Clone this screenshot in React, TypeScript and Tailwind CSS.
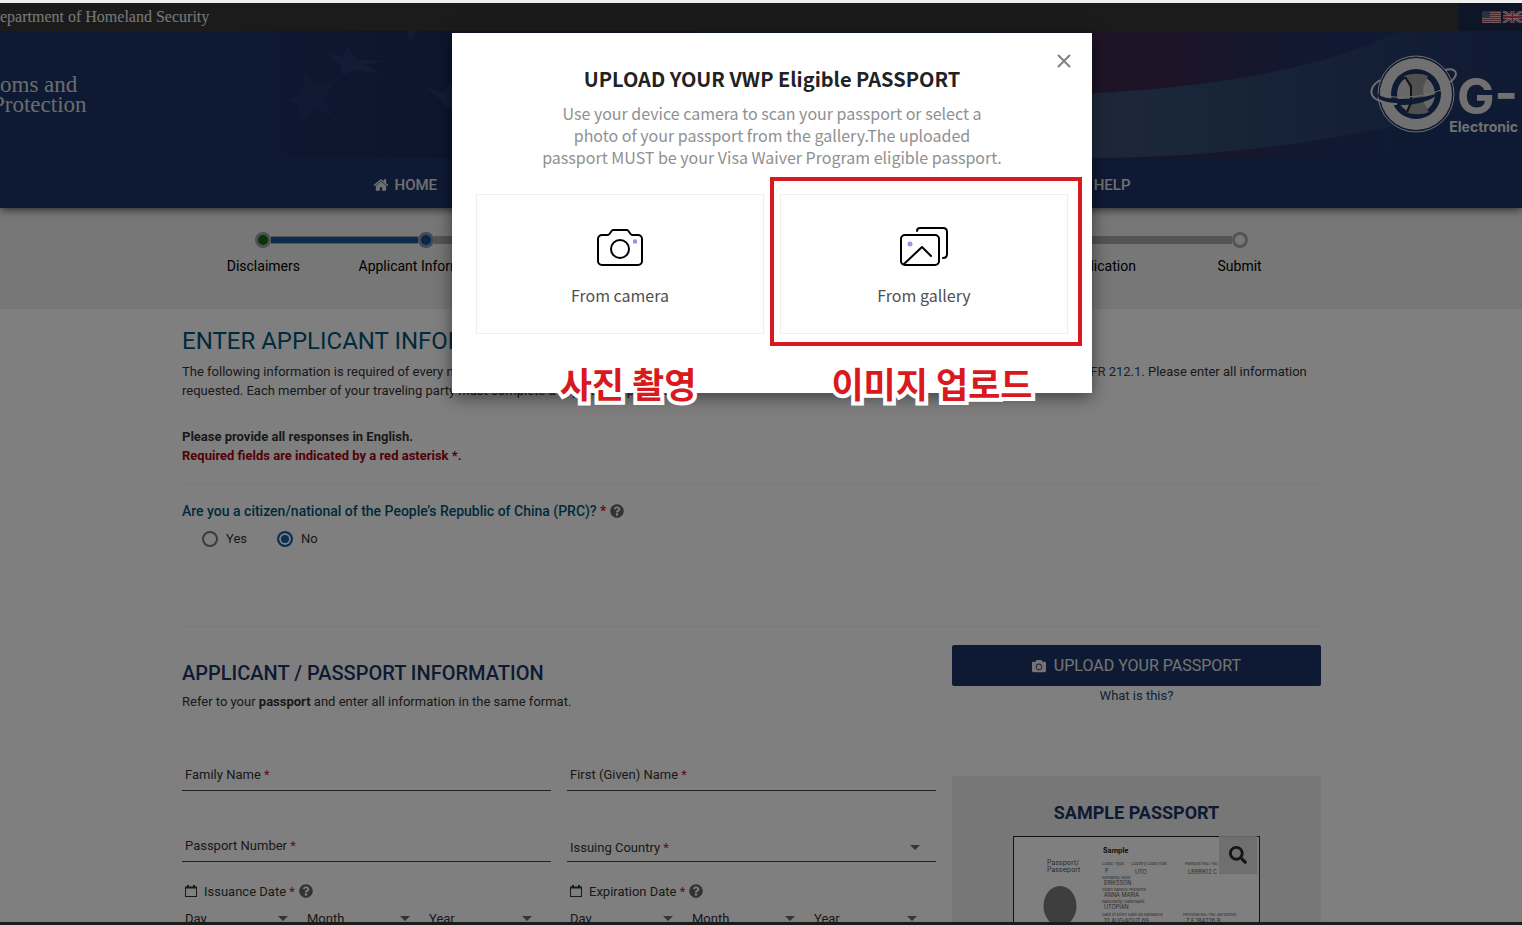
import { FaCamera, FaQuestionCircle, FaSearch } from "react-icons/fa";

const steps = [
  "Disclaimers",
  "Applicant Information",
  "Personal Information",
  "Travel Information",
  "Eligibility Questions",
  "Review Application",
  "Submit",
];

function Caret() {
  return (
    <svg viewBox="0 0 10 5" className="w-[10px] h-[5px] shrink-0 pointer-events-none" fill="#6b6b6b" aria-hidden="true">
      <path d="M0 0h10L5 5z" />
    </svg>
  );
}

function HomeIcon() {
  return (
    <svg viewBox="0 0 1792 1792" className="size-4" fill="currentColor" aria-hidden="true">
      <path d="M1472 992v480q0 26-19 45t-45 19h-384v-384h-256v384h-384q-26 0-45-19t-19-45v-480q0-1 .5-3t.5-3l575-474 575 474q1 2 1 6zm223-69l-62 74q-8 9-21 11h-3q-13 0-21-7l-692-577-692 577q-12 8-24 7-13-2-21-11l-62-74q-8-10-7-23.500t11-21.500l719-599q32-26 76-26t76 26l244 204v-195q0-14 9-23t23-9h192q14 0 23 9t9 23v408l219 182q10 8 11 21.500t-7 23.500z" />
    </svg>
  );
}

function CalendarIcon() {
  return (
    <svg viewBox="0 0 12 14" className="w-3 h-[14px] mr-[7px]" fill="none" stroke="#333333" aria-hidden="true">
      <rect x="0.5" y="3.500" width="11" height="9" />
      <path d="M0 3.500h12" strokeWidth="2" />
      <path d="M3 1v3M9 1v3" strokeWidth="2" />
    </svg>
  );
}

function Required() {
  return <span className="text-[#c8102e]">*</span>;
}

function Flags() {
  return (
    <svg viewBox="0 0 40 12" className="w-10 h-3" aria-label="Language">
      <rect width="19" height="12" fill="#e8c8cc" />
      {[0, 2, 4, 6, 8, 10].map((y) => (
        <rect key={y} y={y} width="19" height="1.200" fill="#d8404a" />
      ))}
      <rect width="8" height="6.500" fill="#4a6296" />
      <g transform="translate(21 0)">
        <rect width="19" height="12" fill="#26396e" />
        <path d="M0 0l19 12M19 0L0 12" stroke="#e8e0e0" strokeWidth="2.400" />
        <path d="M0 0l19 12M19 0L0 12" stroke="#d8404a" strokeWidth="0.9" />
        <path d="M9.500 0v12M0 6h19" stroke="#e8e0e0" strokeWidth="3.600" />
        <path d="M9.500 0v12M0 6h19" stroke="#d8404a" strokeWidth="2" />
      </g>
    </svg>
  );
}

function BannerArt() {
  return (
    <svg viewBox="0 0 1522 127" preserveAspectRatio="xMidYMin slice" className="absolute inset-0 w-full h-full" aria-hidden="true">
      <defs>
        <linearGradient id="canton" x1="0" x2="1">
          <stop offset="0" stopColor="#182c58" stopOpacity="0" />
          <stop offset="0.5" stopColor="#182c58" />
          <stop offset="1" stopColor="#182a52" />
        </linearGradient>
        <linearGradient id="stripe" x1="0" x2="1">
          <stop offset="0" stopColor="#42284e" />
          <stop offset="0.4" stopColor="#3a2850" />
          <stop offset="1" stopColor="#1e3466" stopOpacity="0" />
        </linearGradient>
        <linearGradient id="band" x1="0" x2="1">
          <stop offset="0" stopColor="#405778" />
          <stop offset="0.45" stopColor="#304870" />
          <stop offset="1" stopColor="#1e3466" />
        </linearGradient>
      </defs>
      <rect x="200" width="500" height="127" fill="url(#canton)" />
      <rect x="1000" width="440" height="127" fill="url(#stripe)" />
      <path d="M1000 66C1150 62 1290 52 1400 0H1522V70C1440 82 1300 127 1092 127H1000Z" fill="url(#band)" />
      <g fill="#26396a">
        <path d="M323 19l18 7 7-10 8 12 27 2-18 4 14 8-23-3-14 5-1-10z" />
        <path d="M305 42l9 14 23-7-15 19 12 18-22-9-12 16-2-20-11-4 14-6z" opacity="0.6" />
        <path d="M426 57l17 4 9-8v28l-10-11z" />
        <path d="M408 0h9l-6 10-3-4z" />
      </g>
    </svg>
  );
}

function GlobalLogo() {
  return (
    <svg viewBox="0 0 88 78" className="w-[88px] h-[78px]" fill="none" aria-hidden="true">
      <path d="M76 15c8-2 13 1 10 7-2 3-4 5-8 6" stroke="#e0e0e0" strokeWidth="2" />
      <circle cx="47" cy="39" r="38" stroke="#e0e0e0" strokeWidth="1" />
      <circle cx="47" cy="39" r="36" fill="#e0e0e0" />
      <circle cx="47" cy="39" r="25" fill="#1c3466" />
      <circle cx="47" cy="39" r="19" fill="#d0d0d0" />
      <path d="M35 21c8-3 17-3 24 0l-5 12 1 15 5 9c-7 3-16 3-23 0l4-10V34z" fill="#a0a0a0" />
      <path d="M36 22l6 9v17l-4 9" stroke="#222222" strokeWidth="2" />
      <path d="M10 27c-9 11 1 17 21 17 17 0 31-3 41-7-9 8-22 13-38 13C13 50 2 41 10 27z" fill="#1c3466" />
      <path d="M11 25C-1 33-1 43 14 47c5 1 9 2 14 2" stroke="#e0e0e0" strokeWidth="2" />
      <path d="M12 33c-3 6 8 10 21 9 16 0 29-3 39-7" stroke="#e0e0e0" strokeWidth="1" />
    </svg>
  );
}

function Header() {
  return (
    <header className="relative z-10 shadow-[0_2px_8px_rgba(0,0,0,0.6)] font-['Roboto',sans-serif]">
      <div className="flex justify-between bg-[#363636] h-7">
        <p className="font-['Liberation_Serif',serif] text-base leading-7 text-[#f0f0f0]">epartment of Homeland Security</p>
        <div className="flex items-center bg-[#1a2a4c] w-16 pl-6 overflow-hidden">
          <Flags />
        </div>
      </div>
      <div className="bg-[#1c3466]">
        <div className="relative h-[127px]">
          <BannerArt />
          <div className="relative flex justify-between items-start overflow-hidden h-full">
            <p className="font-['Liberation_Serif',serif] text-[23px] leading-5 text-[#d8d8d8] pt-11">
              oms and
              <br />
              <span className="-ml-2">Protection</span>
            </p>
            <div className="flex pt-6 pr-1 text-[#e0e0e0] font-['Inter',sans-serif]">
              <GlobalLogo />
              <div className="-ml-2 pt-4 text-right">
                <p className="text-[50px] leading-[50px] font-bold">G-</p>
                <p className="text-sm leading-3 font-bold">Electronic</p>
              </div>
            </div>
          </div>
        </div>
        <div className="pr-[19px]">
          <nav className="flex justify-between items-center max-w-[758px] mx-auto h-[50px] pb-1 pt-2 text-[15px] font-medium text-[#e0e0e0]">
            <a href="#home" className="flex items-center gap-[6px]"><HomeIcon /> HOME</a>
            <a href="#new">NEW APPLICATION</a>
            <a href="#status">CHECK ESTA STATUS</a>
            <a href="#help">HELP</a>
          </nav>
        </div>
      </div>
    </header>
  );
}

function Stepper() {
  return (
    <section className="bg-[#eeeeee] h-[101px] pt-6 pr-[19px]">
      <ol className="grid grid-cols-7 max-w-[1139px] mx-auto text-sm text-black">
        {steps.map((step, i) => (
          <li key={step} className="flex flex-col items-center">
            <div className="flex items-center w-full">
              <span className={i === 0 ? "flex-1" : i === 1 ? "flex-1 h-2 bg-[#18599a] border-y border-[#aaaaaa]" : "flex-1 h-2 bg-[#a8a8a8]"}></span>
              <span
                className={
                  i === 0
                    ? "size-4 rounded-full border-3 border-[#a0a0a0] bg-[#0a6a14]"
                    : i === 1
                      ? "size-4 rounded-full border-3 border-[#8496ac] bg-[#125098]"
                      : "size-4 rounded-full border-3 border-[#a8a8a8] bg-[#eeeeee]"
                }
              ></span>
              <span className={i === 6 ? "flex-1" : i === 0 ? "flex-1 h-2 bg-[#18599a] border-y border-[#aaaaaa]" : "flex-1 h-2 bg-[#a8a8a8]"}></span>
            </div>
            <span className="mt-2 leading-5 whitespace-nowrap">{step}</span>
          </li>
        ))}
      </ol>
    </section>
  );
}

function TextField({ id, label }: { id: string; label: string }) {
  return (
    <div className="flex items-center h-9 pl-[3px] pt-[3px] border-b border-[#444444]">
      <label htmlFor={id} className="shrink-0">{label} <Required /></label>
      <input id={id} type="text" className="flex-1 min-w-0 bg-transparent outline-none" />
    </div>
  );
}

function DateField({ id, label }: { id: string; label: string }) {
  return (
    <fieldset>
      <legend className="flex items-center h-5 pl-[3px]">
        <CalendarIcon />
        {label}&nbsp;<Required />
        <FaQuestionCircle className="size-[14px] ml-1 text-[#666666]" />
      </legend>
      <div className="grid grid-cols-3 pt-px pr-[3px]">
        {["Day", "Month", "Year"].map((part) => (
          <div key={part} className="flex items-center h-8 pl-[3px] pr-4">
            <select id={`${id}-${part}`} aria-label={`${label} ${part}`} className="flex-1 min-w-0 appearance-none bg-transparent">
              <option>{part}</option>
            </select>
            <Caret />
          </div>
        ))}
      </div>
    </fieldset>
  );
}

function SamplePassport() {
  return (
    <svg viewBox="0 0 247 160" className="block w-[247px] h-[160px]" fontFamily="Inter, sans-serif" fill="#555555">
      <rect x="0.5" y="0.5" width="246" height="159" fill="#ffffff" stroke="#222222" />
      <text x="90" y="17" fontSize="7" fontWeight="700" fill="#222222">Sample</text>
      <g fontSize="7">
        <text x="34" y="29">Passport/</text>
        <text x="34" y="36">Passeport</text>
      </g>
      <ellipse cx="47" cy="70" rx="16.500" ry="20" fill="#7c7c7c" />
      <g fontSize="4">
        <text x="89" y="29">Code/ Type</text>
        <text x="118" y="29">Country code/ Etat</text>
        <text x="172" y="29">Passport No./ No.</text>
        <text x="89" y="43">Surname/ Nom</text>
        <text x="89" y="55">Given names/ Prénoms</text>
        <text x="89" y="67">Nationality/ Nationalité</text>
        <text x="89" y="80">Date of birth/ Date de naissance</text>
        <text x="170" y="80">Personal No./ No. personnel</text>
      </g>
      <g fontSize="5.500">
        <text x="92" y="37">P</text>
        <text x="122" y="38">UTO</text>
        <text x="175" y="38">L898902 C</text>
        <text x="91" y="49">ERIKSSON</text>
        <text x="91" y="61">ANNA MARIA</text>
        <text x="91" y="73">UTOPIAN</text>
        <text x="91" y="87">12 AUG/AOUT 69</text>
        <text x="173" y="87">Z E 184226 B</text>
      </g>
    </svg>
  );
}

function ApplicantForm() {
  return (
    <main className="pr-[19px]">
      <div className="max-w-[1139px] mx-auto pt-4 text-[13px] leading-[19px] text-[#333333]">
        <h1 className="text-2xl leading-8 text-[#015577]">ENTER APPLICANT INFORMATION</h1>
        <p className="mt-[5px]">
          The following information is required of every nonimmigrant visitor not in possession of a visitor's visa, traveling to the United States by air or by sea under <a href="#cfr" className="text-[#1b4a7a]">8 CFR 212.1.</a> Please enter all information
          requested. Each member of your traveling party must complete a separate application.
        </p>
        <p className="mt-[27px] font-bold">Please provide all responses in English.</p>
        <p className="font-bold text-[#a8000c]">Required fields are indicated by a red asterisk *.</p>
        <hr className="mt-[19px] border-[#f3f3f3]" />
        <fieldset>
          <legend className="flex items-center pt-4 text-sm leading-5 font-medium text-[#015577]">
            Are you a citizen/national of the People’s Republic of China (PRC)?&nbsp;<Required />
            <FaQuestionCircle className="size-[14px] ml-1 text-[#666666]" />
          </legend>
          <div className="flex gap-[30px] mt-2 pl-5 leading-5">
            {["Yes", "No"].map((answer) => (
              <label key={answer} className="flex items-center gap-2">
                <input
                  type="radio"
                  name="prc"
                  defaultChecked={answer === "No"}
                  className="appearance-none size-4 rounded-full border-2 border-[#757575] checked:border-[#125ea8] checked:bg-[#125ea8] checked:shadow-[inset_0_0_0_2px_white]"
                />
                {answer}
              </label>
            ))}
          </div>
        </fieldset>
        <hr className="mt-[77px] border-[#f3f3f3]" />
        <div className="grid grid-cols-3 gap-x-4 mt-[18px]">
          <div className="col-span-2 pt-4">
            <h2 className="text-xl leading-6 font-medium text-[#1c3466]">APPLICANT / PASSPORT INFORMATION</h2>
            <p className="mt-[7px] leading-5">Refer to your <b>passport</b> and enter all information in the same format.</p>
            <div className="grid grid-cols-2 gap-x-4 mt-[43px]">
              <TextField id="family" label="Family Name" />
              <TextField id="first" label="First (Given) Name" />
            </div>
            <div className="grid grid-cols-2 gap-x-4 mt-[35px]">
              <TextField id="number" label="Passport Number" />
              <div className="flex items-center h-9 pl-[3px] pr-4 pt-[7px] border-b border-[#444444]">
                <label htmlFor="country" className="shrink-0">Issuing Country <Required /></label>
                <select id="country" className="flex-1 min-w-0 appearance-none bg-transparent"></select>
                <Caret />
              </div>
            </div>
            <div className="grid grid-cols-2 gap-x-4 mt-[19px]">
              <DateField id="issuance" label="Issuance Date" />
              <DateField id="expiration" label="Expiration Date" />
            </div>
          </div>
          <div className="flex flex-col">
            <button className="flex items-center justify-center gap-2 h-[41px] rounded-xs bg-[#1c3466] text-base text-[#e8e8e8]">
              <FaCamera className="size-[14px]" /> UPLOAD YOUR PASSPORT
            </button>
            <a href="#what" className="self-center leading-5 text-[#114a78]">What is this?</a>
            <div className="flex flex-col items-center mt-[70px] pt-[25px] pb-8 bg-[#eeeeee]">
              <h3 className="text-lg leading-6 font-bold text-[#1c3466]">SAMPLE PASSPORT</h3>
              <div className="relative mt-[11px]">
                <SamplePassport />
                <button aria-label="Enlarge sample passport" className="absolute top-0 right-[3px] flex items-center justify-center size-[38px] bg-[#dcdce2]/90 text-[#2a2a2a]">
                  <FaSearch className="size-[18px]" />
                </button>
              </div>
            </div>
          </div>
        </div>
      </div>
    </main>
  );
}

function UploadDialog() {
  return (
    <div role="dialog" aria-labelledby="upload-title" className="relative w-[640px] h-[360px] mt-[30px] px-6 bg-white shadow-[0_4px_16px_rgba(0,0,0,0.5)] font-['Noto_Sans_CJK_KR',sans-serif] text-center">
      <button aria-label="Close" className="absolute top-[21px] right-[21px]">
        <svg viewBox="0 0 14 14" className="size-[14px]" stroke="#808080" strokeWidth="2"><path d="M1 1l12 12M13 1L1 13" /></svg>
      </button>
      <h2 id="upload-title" className="pt-8 text-xl leading-7 font-bold text-[#222222]">UPLOAD YOUR VWP Eligible PASSPORT</h2>
      <p className="mt-[9px] text-base leading-[22px] text-[#909090]">
        Use your device camera to scan your passport or select a
        <br />
        photo of your passport from the gallery.The uploaded
        <br />
        passport MUST be your Visa Waiver Program eligible passport.
      </p>
      <div className="grid grid-cols-2 gap-4 mt-[26px] text-base leading-6 text-[#505050]">
        <button className="relative flex flex-col items-center h-[140px] pt-[30px] border border-[#eeeeee]">
          <svg viewBox="0 0 48 44" className="w-12 h-11" fill="none" stroke="#000000" strokeWidth="2" aria-hidden="true">
            <path d="M6 10h6c2 0 3-5 5-5h14c2 0 3 5 5 5h6a4 4 0 0 1 4 4v22a4 4 0 0 1-4 4H6a4 4 0 0 1-4-4V14a4 4 0 0 1 4-4z" />
            <circle cx="24" cy="24" r="9" />
            <rect x="37" y="14.500" width="4" height="4" fill="#a98bea" stroke="none" />
          </svg>
          <span className="mt-[14px]">From camera</span>
          <span className="absolute top-[164px] pl-4 whitespace-nowrap text-[35px] leading-[48px] font-bold text-[#d81920] [-webkit-text-stroke:8px_white] [paint-order:stroke_fill]">사진 촬영</span>
        </button>
        <button className="relative flex flex-col items-center h-[140px] pt-[30px] border border-[#eeeeee]">
          <svg viewBox="0 0 48 44" className="w-12 h-11" fill="none" stroke="#000000" strokeWidth="2" strokeLinecap="round" aria-hidden="true">
            <rect x="1" y="10" width="38" height="30" rx="4" />
            <path d="M4 39l18-17 9 9" strokeLinejoin="round" />
            <path d="M17 6c0-2 1-3 3-3h23c3 0 4 1 4 4v22c0 3-1 4-4 4" />
            <circle cx="10" cy="19" r="2.500" fill="#a98bea" stroke="none" />
          </svg>
          <span className="mt-[14px]">From gallery</span>
          <span className="absolute -top-[18px] -bottom-[13px] -left-[11px] -right-[15px] border-4 border-[#d81920]"></span>
          <span className="absolute top-[164px] pl-4 whitespace-nowrap text-[35px] leading-[48px] font-bold text-[#d81920] [-webkit-text-stroke:8px_white] [paint-order:stroke_fill]">이미지 업로드</span>
        </button>
      </div>
    </div>
  );
}

export default function App() {
  return (
    <div className="h-screen overflow-hidden border-t-3 border-[#eeeeee] bg-white font-['Roboto',sans-serif]">
      <div className="relative h-full overflow-hidden border-b-3 border-[#1c1c1c]">
        <Header />
        <Stepper />
        <ApplicantForm />
        <div className="absolute inset-0 z-20 flex justify-center items-start pl-[22px] bg-black/50">
          <UploadDialog />
        </div>
      </div>
    </div>
  );
}
